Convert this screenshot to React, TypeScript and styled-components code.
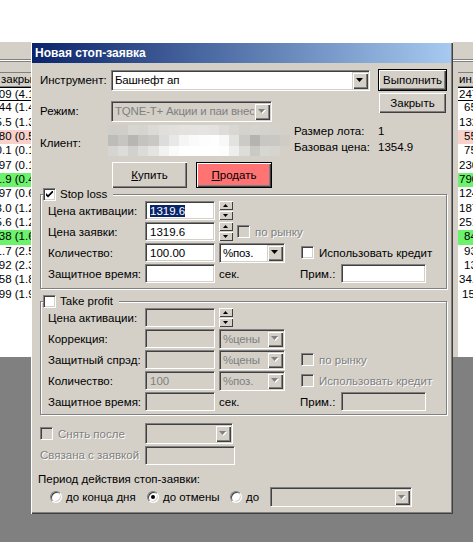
import React from "react";
import styled, { createGlobalStyle, css } from "styled-components";

const FACE = "#d4d0c8";
const FONT = `"Liberation Sans", Arial, sans-serif`;

const GlobalStyle = createGlobalStyle`
  html, body {
    margin: 0;
    padding: 0;
    background: #808080;
  }
`;

// classic win32 bevels
const sunken = css`
  border: 1px solid;
  border-color: #808080 #fff #fff #808080;
  box-shadow: inset 1px 1px 0 #404040, inset -1px -1px 0 ${FACE};
`;

const raised = css`
  box-shadow: inset 1px 1px 0 #fff, inset -1px -1px 0 #404040,
    inset -2px -2px 0 #808080;
`;

// Background application
const Screen = styled.div`
  position: relative;
  width: 473px;
  height: 542px;
  overflow: hidden;
  background: #808080;
  font-family: ${FONT};
  font-size: 11.5px;
  color: #000;
  display: flex;
  flex-direction: column;
`;

const TopStrip = styled.div`
  height: 42px;
  flex: none;
  background: #fff;
`;

const AppWindow = styled.div`
  height: 315px;
  flex: none;
  background: ${FACE};
  display: flex;
  flex-direction: column;
`;

const Toolbar = styled.div`
  height: 30px;
  flex: none;
  box-sizing: border-box;
  padding-top: 17px;
`;

const Grip = styled.div`
  height: 1px;
  border-top: 1px solid #808080;
  border-bottom: 1px solid #808080;
  background: #fff;
`;

const Panes = styled.div`
  flex: 1;
  display: flex;
  min-height: 0;
`;

const TablePane = styled.div<{ $w?: number }>`
  ${(p) => (p.$w ? `width: ${p.$w}px; flex: none;` : "flex: 1;")}
  background: #fff;
  overflow: hidden;
  display: flex;
  flex-direction: column;
`;

const Splitter = styled.div`
  width: 6px;
  flex: none;
  background: ${FACE};
`;

const HeaderRow = styled.div`
  height: 15px;
  flex: none;
  box-sizing: border-box;
  background: ${FACE};
  border-top: 1px solid #808080;
  border-bottom: 1px solid #808080;
  line-height: 13px;
  white-space: nowrap;
  padding-left: 1px;
`;

const TONES: Record<string, string> = {
  pink: "#f8d2ca",
  green: "#6cf26c",
};

const Row = styled.div<{ $tone?: string; $focus?: boolean }>`
  height: 14.35px;
  flex: none;
  box-sizing: border-box;
  line-height: 13px;
  white-space: nowrap;
  background: ${(p) => (p.$tone ? TONES[p.$tone] : "#fff")};
  ${(p) =>
    p.$focus &&
    css`
      border-top: 1px solid #000;
      border-bottom: 1px solid #000;
    `}
`;

const LeftCell = styled.div`
  width: 55px;
  display: flex;
  justify-content: flex-end;
`;

const RightCell = styled.div<{ $indent: number }>`
  padding-left: ${(p) => p.$indent}px;
`;

// Dialog
const Dialog = styled.div`
  position: absolute;
  left: 31px;
  top: 42px;
  width: 422px;
  height: 472px;
  box-sizing: border-box;
  padding: 1px 2px 2px 1px;
  background: ${FACE};
  box-shadow: inset 1px 1px 0 #fff, inset -1px -1px 0 #404040,
    inset -2px -2px 0 #808080;
  display: flex;
  flex-direction: column;
`;

const TitleBar = styled.div`
  height: 20px;
  flex: none;
  background: linear-gradient(to right, #0a246a, #a6caf0);
  color: #fff;
  font-size: 12px;
  font-weight: bold;
  line-height: 20px;
  padding-left: 3px;
`;

const Body = styled.div`
  flex: 1;
  padding-left: 8px;
  display: flex;
  flex-direction: column;
  align-items: flex-start;
`;

const TopRow = styled.div`
  margin-top: 6px;
  display: flex;
`;

const TopGrid = styled.div`
  width: 338px;
  display: grid;
  grid-template-columns: 71px 267px;
  grid-template-rows: 22px 22px;
  row-gap: 9px;
  align-items: center;
  justify-items: start;
`;

const ButtonCol = styled.div`
  display: flex;
  flex-direction: column;
  align-items: flex-start;
  gap: 2px;
`;

const PushButton = styled.button<{
  $w: number;
  $h: number;
  $default?: boolean;
  $bg?: string;
  $shift?: number;
}>`
  width: ${(p) => p.$w}px;
  height: ${(p) => p.$h}px;
  margin: 0 0 0 ${(p) => p.$shift ?? 0}px;
  padding: 0;
  box-sizing: border-box;
  font: inherit;
  color: #000;
  background: ${(p) => p.$bg ?? FACE};
  border: ${(p) => (p.$default ? "1px solid #000" : "none")};
  ${raised};
  & u {
    text-decoration: underline;
  }
`;

const Text = styled.span<{ $off?: boolean }>`
  white-space: nowrap;
  color: ${(p) => (p.$off ? "#808080" : "#000")};
  text-shadow: ${(p) => (p.$off ? "1px 1px 0 #fff" : "none")};
`;

const Field = styled.div<{ $w: number; $h?: number; $off?: boolean }>`
  ${sunken};
  box-sizing: border-box;
  width: ${(p) => p.$w}px;
  height: ${(p) => p.$h ?? 19}px;
  background: ${(p) => (p.$off ? FACE : "#fff")};
  color: ${(p) => (p.$off ? "#808080" : "#000")};
  padding-left: 4px;
  display: flex;
  align-items: center;
  white-space: nowrap;
  overflow: hidden;
`;

const Selected = styled.span`
  background: #0a246a;
  color: #fff;
`;

const Combo = styled.div<{ $w: number; $h?: number; $off?: boolean }>`
  ${sunken};
  box-sizing: border-box;
  width: ${(p) => p.$w}px;
  height: ${(p) => p.$h ?? 20}px;
  padding: 1px;
  background: ${(p) => (p.$off ? FACE : "#fff")};
  color: ${(p) => (p.$off ? "#808080" : "#000")};
  display: flex;
`;

const ComboText = styled.span`
  flex: 1;
  padding-left: 2px;
  letter-spacing: -0.2px;
  display: flex;
  align-items: center;
  white-space: nowrap;
  overflow: hidden;
`;

const DropBtn = styled.span`
  width: 16px;
  flex: none;
  background: ${FACE};
  display: flex;
  align-items: center;
  justify-content: center;
  box-shadow: inset 1px 1px 0 ${FACE}, inset 2px 2px 0 #fff,
    inset -1px -1px 0 #404040, inset -2px -2px 0 #808080;
`;

const SpinCol = styled.div`
  width: 14px;
  height: 19px;
  display: flex;
  flex-direction: column;
  gap: 1px;
`;

const SpinBtn = styled.span`
  flex: 1;
  background: ${FACE};
  display: flex;
  align-items: center;
  justify-content: center;
  box-shadow: inset 1px 1px 0 #fff, inset -1px -1px 0 #404040;
`;

const Box = styled.span<{ $off?: boolean }>`
  ${sunken};
  box-sizing: border-box;
  width: 13px;
  height: 13px;
  flex: none;
  background: ${(p) => (p.$off ? FACE : "#fff")};
  display: flex;
  align-items: center;
  justify-content: center;
`;

const CheckLabel = styled.span<{ $gap?: number }>`
  display: inline-flex;
  align-items: center;
  gap: ${(p) => p.$gap ?? 5}px;
`;

const ClientRow = styled.div`
  height: 36px;
  display: flex;
`;

const ClientLabel = styled.span`
  width: 68px;
  padding-top: 14px;
  line-height: 14px;
`;

const Pixels = styled.div`
  margin-top: 3px;
  width: 182px;
  height: 31px;
  display: grid;
  grid-template-columns: repeat(18, 1fr);
  grid-template-rows: repeat(3, 1fr);
`;

const Pixel = styled.span<{ $c: string }>`
  background: ${(p) => p.$c};
`;

const InfoGrid = styled.div`
  margin: 1px 0 0 4px;
  display: grid;
  grid-template-columns: 84px auto;
  grid-auto-rows: 16px;
  line-height: 16px;
`;

const TradeRow = styled.div`
  margin-top: 4px;
  padding-left: 72px;
  display: flex;
  gap: 9px;
`;

const Group = styled.fieldset<{ $top: number; $bottom: number }>`
  margin: ${(p) => p.$top}px 0 0 0;
  width: 407px;
  box-sizing: border-box;
  min-inline-size: 0;
  padding: 0 0 ${(p) => p.$bottom}px 2px;
  border: 1px solid #808080;
  box-shadow: inset 1px 1px 0 #fff, 1px 1px 0 #fff;
`;

const Legend = styled.legend`
  margin: 0;
  padding: 0 6px 0 0;
  height: 13px;
  line-height: 13px;
  background: ${FACE};
`;

const FormGrid = styled.div`
  margin-left: 5px;
  display: grid;
  grid-template-columns: 97px 74px 82px 1fr;
  grid-auto-rows: 19px;
  row-gap: 2px;
  align-items: center;
  justify-items: start;
`;

const Wide = styled.div`
  grid-column: 3 / span 2;
  display: flex;
  align-items: center;
  gap: 4px;
`;

const NoteCell = styled.div`
  display: flex;
  align-items: center;
`;

const NoteLabel = styled.span`
  width: 41px;
  margin-left: -1px;
  white-space: nowrap;
`;

const ExtraGrid = styled.div`
  margin-top: 8px;
  display: grid;
  grid-template-columns: 105px auto;
  grid-template-rows: 21px 20px;
  row-gap: 1px;
  align-items: center;
  justify-items: start;
`;

const PeriodLabel = styled.div`
  margin: 7px 0 0 -2px;
  line-height: 14px;
  white-space: nowrap;
`;

const RadioRow = styled.div`
  margin-top: 1px;
  height: 20px;
  padding-left: 10px;
  display: flex;
  align-items: center;
`;

const RadioItem = styled.span<{ $w: number }>`
  width: ${(p) => p.$w}px;
  flex: none;
  display: flex;
  align-items: center;
  gap: 4px;
  white-space: nowrap;
`;

const Radio = styled.span<{ $on?: boolean }>`
  width: 12px;
  height: 12px;
  flex: none;
  box-sizing: border-box;
  border-radius: 50%;
  background: #fff;
  border: 1px solid;
  border-color: #808080 #fff #fff #808080;
  box-shadow: inset 1px 1px 0 #404040, inset -1px -1px 0 ${FACE};
  display: flex;
  align-items: center;
  justify-content: center;
  &::after {
    content: "";
    width: 4px;
    height: 4px;
    border-radius: 50%;
    background: #000;
    display: ${(p) => (p.$on ? "block" : "none")};
  }
`;

// small drawings
const Arrow = ({
  up,
  off,
  small,
}: {
  up?: boolean;
  off?: boolean;
  small?: boolean;
}) => {
  const w = small ? 5 : 7;
  const h = small ? 3 : 4;
  const pts = up ? `0,${h} ${w},${h} ${w / 2},0` : `0,0 ${w},0 ${w / 2},${h}`;
  return (
    <svg width={w + 1} height={h + 1} viewBox={`0 0 ${w + 1} ${h + 1}`}>
      {off && <polygon points={pts} fill="#fff" transform="translate(1,1)" />}
      <polygon points={pts} fill={off ? "#808080" : "#000"} />
    </svg>
  );
};

const CheckMark = () => (
  <svg width="7" height="7" viewBox="0 0 7 7">
    <polygon points="0,2 2,4 7,-1 7,1.5 2,6.5 0,4.5" fill="#000" />
  </svg>
);

const Check = ({
  label,
  on,
  off,
  gap,
}: {
  label: string;
  on?: boolean;
  off?: boolean;
  gap?: number;
}) => (
  <CheckLabel $gap={gap}>
    <Box $off={off}>{on && <CheckMark />}</Box>
    <Text $off={off}>{label}</Text>
  </CheckLabel>
);

const DropDown = ({
  w,
  h,
  text,
  off,
}: {
  w: number;
  h?: number;
  text?: string;
  off?: boolean;
}) => (
  <Combo $w={w} $h={h} $off={off}>
    <ComboText>{text}</ComboText>
    <DropBtn>
      <Arrow off={off} />
    </DropBtn>
  </Combo>
);

const Spinner = () => (
  <SpinCol>
    <SpinBtn>
      <Arrow up small />
    </SpinBtn>
    <SpinBtn>
      <Arrow small />
    </SpinBtn>
  </SpinCol>
);

const ROWS: { left: string; right: string; indent: number; tone?: string }[] = [
  { left: "1 148.09 (4.16%)", right: "2473", indent: 1 },
  { left: "231.44 (1.43%)", right: "6534", indent: 6 },
  { left: "95.5 (1.37%)", right: "1325", indent: 1 },
  { left: "48.80 (0.53%)", right: "5512", indent: 6, tone: "pink" },
  { left: "10.1 (0.14%)", right: "7590", indent: 6 },
  { left: "12.97 (0.16%)", right: "2304", indent: 1 },
  { left: "71.9 (0.49%)", right: "7901", indent: 1, tone: "green" },
  { left: "41.97 (0.68%)", right: "1243", indent: 1 },
  { left: "13.0 (1.25%)", right: "1874", indent: 1 },
  { left: "25.6 (1.27%)", right: "2512", indent: 1 },
  { left: "19.38 (1.60%)", right: "8421", indent: 6, tone: "green" },
  { left: "31.7 (2.57%)", right: "9310", indent: 6 },
  { left: "12.92 (2.33%)", right: "1375", indent: 6 },
  { left: "62.58 (1.82%)", right: "34.51", indent: 1 },
  { left: "21.99 (1.93%)", right: "15.72", indent: 4 },
];

const PIXELS = [
  ["#cfcdc7", "#d0cec8", "#d8d6d1", "#d6d4cf", "#dcdad6", "#e1dfdb", "#e2e0dc", "#e4e2de", "#e5e3df", "#e6e4e0", "#e4e2de", "#dedcd8", "#d9d7d2", "#d4d2cc", "#d6d4ce", "#d4d2cc", "#d3d1cb", "#d4d0c8"],
  ["#bdbcb8", "#c6c5c1", "#b7b6b2", "#c4c3bf", "#c9c8c4", "#dcdcda", "#e8e8e7", "#f5f5f5", "#fafafa", "#fdfdfd", "#fefefe", "#f8f8f8", "#e2e2e0", "#cbcac6", "#b5b4b0", "#c8c7c3", "#c9c8c2", "#cfccc5"],
  ["#d6d5d2", "#dcdcda", "#d2d1ce", "#dcdbd8", "#e4e4e2", "#f2f2f1", "#fbfbfb", "#ffffff", "#ffffff", "#ffffff", "#ffffff", "#fdfdfd", "#eeeeec", "#dddcd8", "#cac9c4", "#d7d6d1", "#d6d4ce", "#d4d0c8"],
];

export default function App() {
  return (
    <>
      <GlobalStyle />
      <Screen>
        <TopStrip />
        <AppWindow>
          <Toolbar>
            <Grip />
          </Toolbar>
          <Panes>
            <TablePane>
              <HeaderRow>закрытие</HeaderRow>
              {ROWS.map((r, i) => (
                <Row key={i} $tone={r.tone} $focus={i === 0}>
                  <LeftCell>{r.left}</LeftCell>
                </Row>
              ))}
            </TablePane>
            <Splitter />
            <TablePane $w={15}>
              <HeaderRow>ин.цена</HeaderRow>
              {ROWS.map((r, i) => (
                <Row key={i} $tone={r.tone} $focus={i === 0}>
                  <RightCell $indent={r.indent}>{r.right}</RightCell>
                </Row>
              ))}
            </TablePane>
          </Panes>
        </AppWindow>

        <Dialog>
          <TitleBar>Новая стоп-заявка</TitleBar>
          <Body>
            <TopRow>
              <TopGrid>
                <Text>Инструмент:</Text>
                <DropDown w={259} h={21} text="Башнефт ап" />
                <Text>Режим:</Text>
                <DropDown w={161} h={21} text="TQNE-T+ Акции и паи внес" off />
              </TopGrid>
              <ButtonCol>
                <PushButton $w={69} $h={22} $default>
                  Выполнить
                </PushButton>
                <PushButton $w={67} $h={20} $shift={1}>
                  Закрыть
                </PushButton>
              </ButtonCol>
            </TopRow>

            <ClientRow>
              <ClientLabel>Клиент:</ClientLabel>
              <Pixels>
                {PIXELS.flatMap((row, y) =>
                  row.map((c, x) => <Pixel key={`${y}-${x}`} $c={c} />)
                )}
              </Pixels>
              <InfoGrid>
                <span>Размер лота:</span>
                <span>1</span>
                <span>Базовая цена:</span>
                <span>1354.9</span>
              </InfoGrid>
            </ClientRow>

            <TradeRow>
              <PushButton $w={75} $h={26}>
                <u>К</u>упить
              </PushButton>
              <PushButton $w={76} $h={26} $default $bg="#ff7373">
                <u>П</u>родать
              </PushButton>
            </TradeRow>

            <Group $top={0} $bottom={5}>
              <Legend>
                <Check label="Stop loss" on gap={4} />
              </Legend>
              <FormGrid>
                <Text>Цена активации:</Text>
                <Field $w={70}>
                  <Selected>1319.6</Selected>
                </Field>
                <Spinner />
                <span />

                <Text>Цена заявки:</Text>
                <Field $w={70}>1319.6</Field>
                <Wide>
                  <Spinner />
                  <Check label="по рынку" off />
                </Wide>

                <Text>Количество:</Text>
                <Field $w={70}>100.00</Field>
                <DropDown w={66} text="%поз." />
                <Check label="Использовать кредит" />

                <Text>Защитное время:</Text>
                <Field $w={70} />
                <Text>сек.</Text>
                <NoteCell>
                  <NoteLabel>Прим.:</NoteLabel>
                  <Field $w={85} />
                </NoteCell>
              </FormGrid>
            </Group>

            <Group $top={6} $bottom={3}>
              <Legend>
                <Check label="Take profit" gap={4} />
              </Legend>
              <FormGrid>
                <Text>Цена активации:</Text>
                <Field $w={70} $off />
                <Spinner />
                <span />

                <Text>Коррекция:</Text>
                <Field $w={70} $off />
                <DropDown w={66} text="%цены" off />
                <span />

                <Text>Защитный спрэд:</Text>
                <Field $w={70} $off />
                <DropDown w={66} text="%цены" off />
                <Check label="по рынку" off />

                <Text>Количество:</Text>
                <Field $w={70} $off>
                  100
                </Field>
                <DropDown w={66} text="%поз." off />
                <Check label="Использовать кредит" off />

                <Text>Защитное время:</Text>
                <Field $w={70} $off />
                <Text>сек.</Text>
                <NoteCell>
                  <NoteLabel>Прим.:</NoteLabel>
                  <Field $w={85} $off />
                </NoteCell>
              </FormGrid>
            </Group>

            <ExtraGrid>
              <Check label="Снять после" off />
              <DropDown w={88} h={21} off />
              <Text $off>Связана с заявкой</Text>
              <Field $w={90} $off />
            </ExtraGrid>

            <PeriodLabel>Период действия стоп-заявки:</PeriodLabel>
            <RadioRow>
              <RadioItem $w={97}>
                <Radio />
                до конца дня
              </RadioItem>
              <RadioItem $w={83}>
                <Radio $on />
                до отмены
              </RadioItem>
              <RadioItem $w={40}>
                <Radio />
                до
              </RadioItem>
              <DropDown w={142} off />
            </RadioRow>
          </Body>
        </Dialog>
      </Screen>
    </>
  );
}
